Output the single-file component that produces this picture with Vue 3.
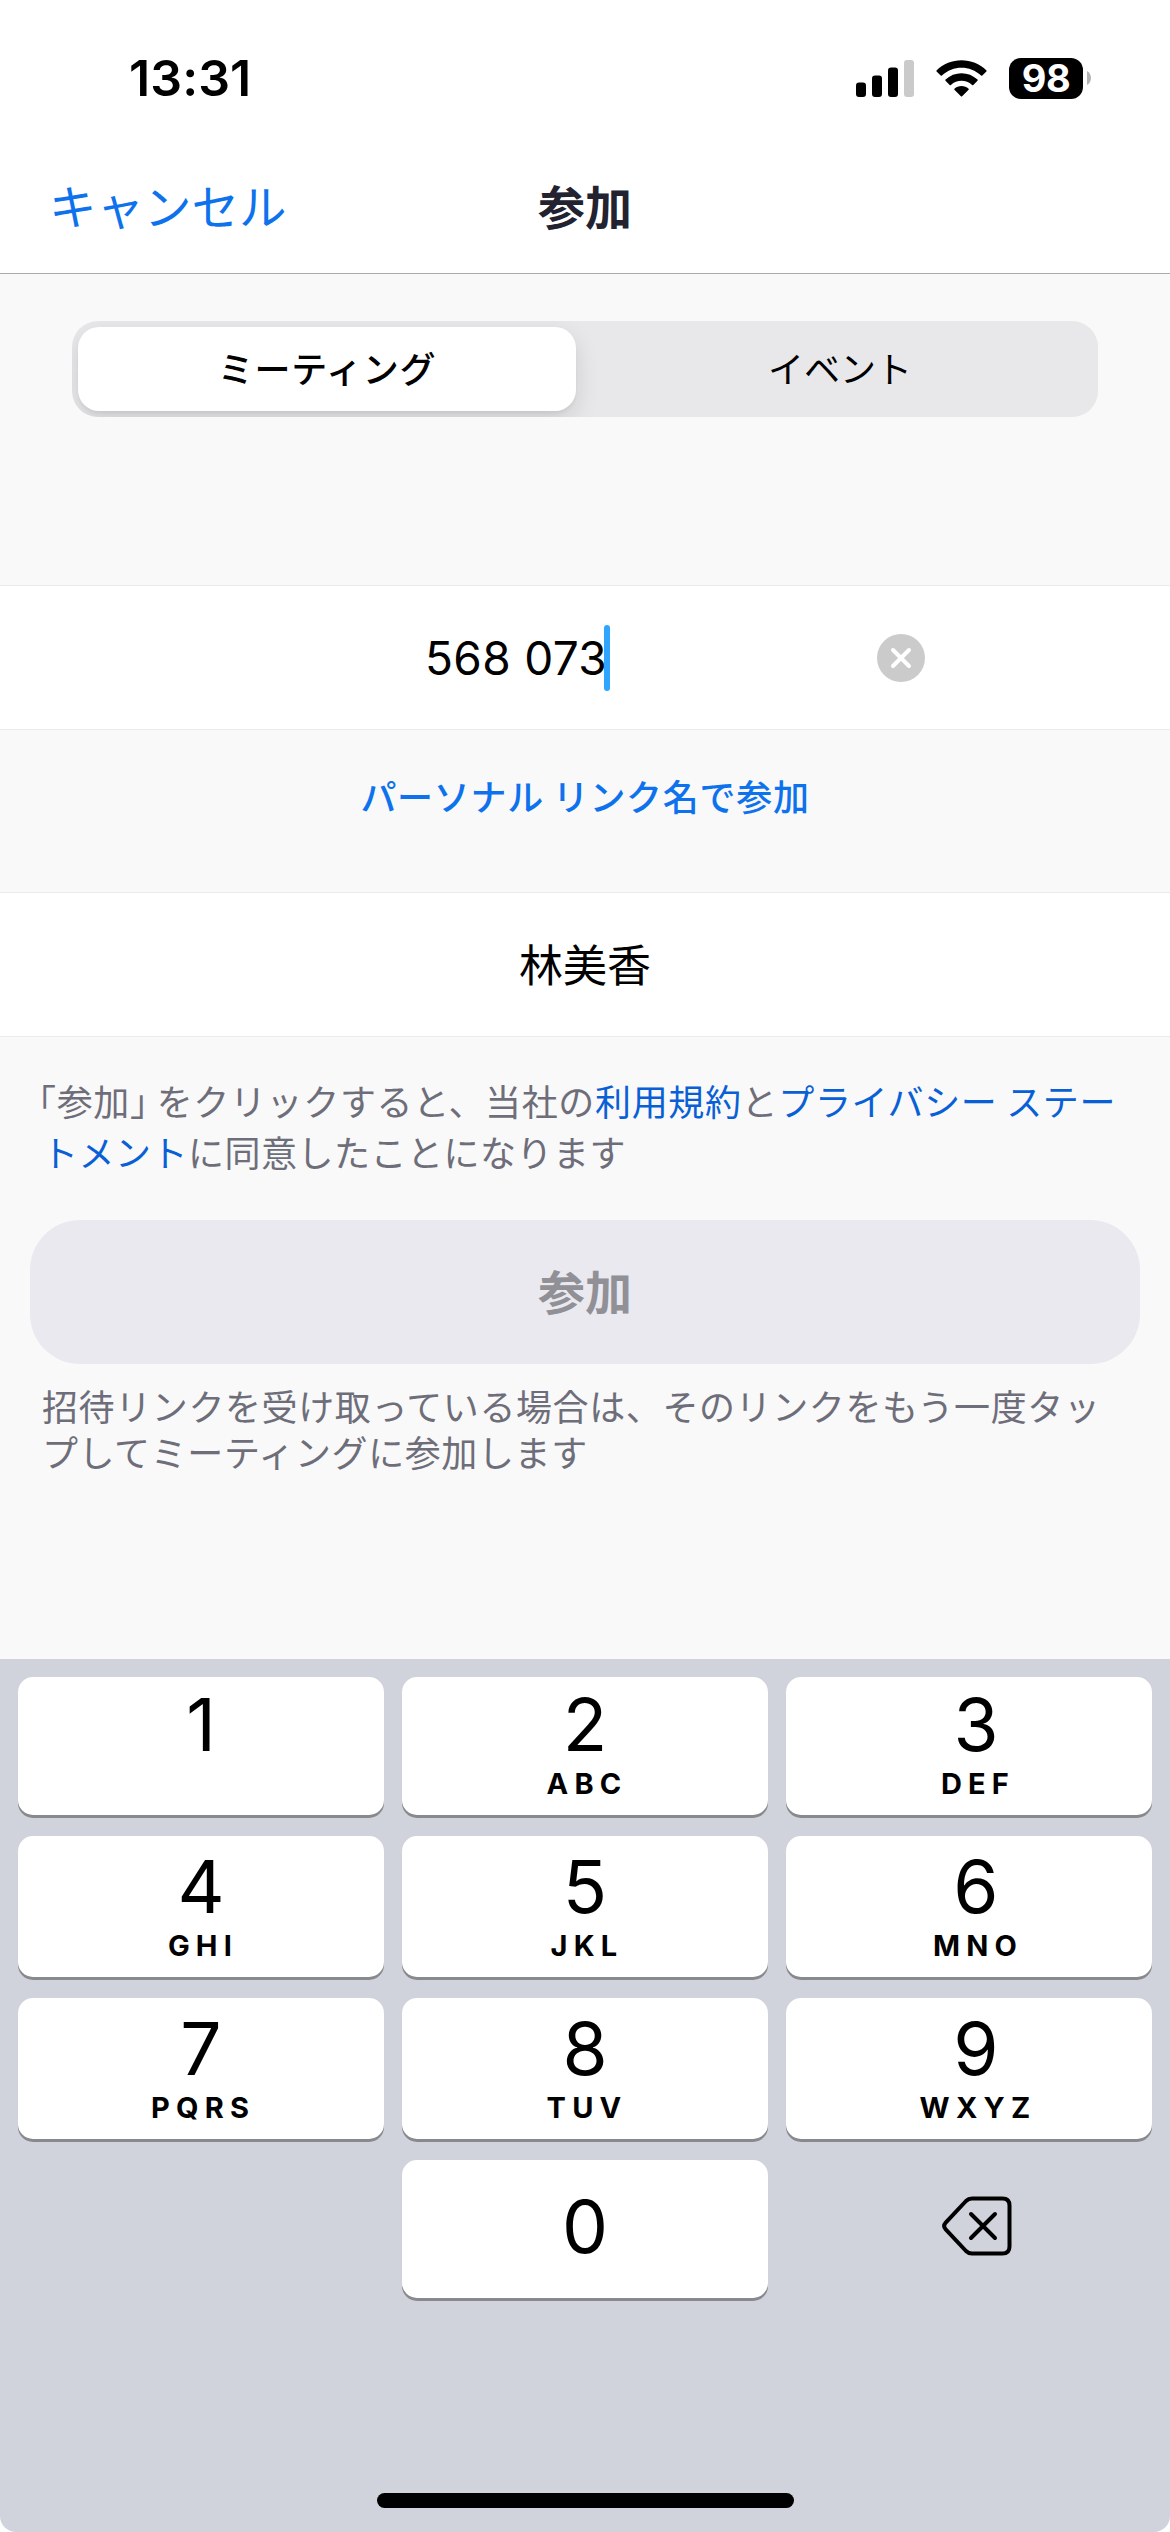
<script setup>
const rows = [
  [{ n: '1', t: '' }, { n: '2', t: 'ABC' }, { n: '3', t: 'DEF' }],
  [{ n: '4', t: 'GHI' }, { n: '5', t: 'JKL' }, { n: '6', t: 'MNO' }],
  [{ n: '7', t: 'PQRS' }, { n: '8', t: 'TUV' }, { n: '9', t: 'WXYZ' }],
]
</script>

<template>
  <div class="screen">
    <header class="top">
      <div class="status">
        <span class="time">13:31</span>
        <div class="indicators">
          <svg class="signal" width="58" height="37" viewBox="0 0 58 37">
            <rect x="0" y="22.5" width="10" height="14.5" rx="3" />
            <rect x="16" y="15.5" width="10" height="21.5" rx="3" />
            <rect x="32" y="7.5" width="10" height="29.5" rx="3" />
            <rect x="48" y="0" width="10" height="37" rx="3" fill="#cacaca" />
          </svg>
          <svg class="wifi" width="51" height="37" viewBox="0 0 51 37">
            <path d="M0.5 10.5C14-3.2 37-3.2 50.5 10.5Q50.8 11 50.4 11.4L46.3 15.6Q45.7 16.1 45.1 15.6C34 5.2 17 5.2 5.9 15.6Q5.3 16.1 4.7 15.6L0.6 11.4Q0.2 11 0.5 10.5Z" />
            <path d="M9.5 19.6C18.2 11 32.8 11 41.5 19.6Q42 20.2 41.5 20.7L37.3 24.9Q36.7 25.4 36.1 24.9C30 19.3 21 19.3 14.9 24.9Q14.3 25.4 13.7 24.9L9.5 20.7Q9 20.2 9.5 19.6Z" />
            <path d="M18.4 28.8C22.2 25 28.8 25 32.6 28.8Q33.1 29.3 32.6 29.8L26.1 36.3Q25.5 36.9 24.9 36.3L18.4 29.8Q17.9 29.3 18.4 28.8Z" />
          </svg>
          <div class="battery">98</div>
          <svg class="nub" width="4" height="14" viewBox="0 0 4 14"><path d="M0 0C5.3 3 5.3 11 0 14Z" fill="#b3b3b3" /></svg>
        </div>
      </div>
      <nav class="nav">
        <span class="cancel">キャンセル</span>
        <h1 class="title">参加</h1>
        <span></span>
      </nav>
    </header>

    <main class="body">
      <div class="segmented">
        <div class="segment active">ミーティング</div>
        <div class="segment">イベント</div>
      </div>

      <div class="field meeting">
        <span></span>
        <span class="number">568 073<i class="caret"></i></span>
        <svg class="clear" width="48" height="48" viewBox="0 0 48 48">
          <circle cx="24" cy="24" r="24" fill="#cbcbcb" />
          <path d="M16 16L32 32M32 16L16 32" stroke="#fff" stroke-width="4" stroke-linecap="round" />
        </svg>
      </div>
      <div class="personal">パーソナル リンク名で参加</div>
      <div class="field name">林美香</div>

      <p class="terms">
        <span class="line first"><span class="half">「</span>参加<span class="half close">」</span>をクリックすると、当社の<a>利用規約</a>と<a>プライバシー ステー</a></span>
        <span class="line"><a>トメント</a>に同意したことになります</span>
      </p>
      <div class="join">参加</div>
      <p class="hint">
        <span class="line">招待リンクを受け取っている場合は、そのリンクをもう一度タッ</span>
        <span class="line">プしてミーティングに参加します</span>
      </p>
    </main>

    <section class="keyboard">
      <div v-for="(row, i) in rows" :key="i" class="row" :class="{ short: i === 0 }">
        <div v-for="k in row" :key="k.n" class="key">
          <span class="digit">{{ k.n }}</span>
          <span class="letters">{{ k.t }}</span>
        </div>
      </div>
      <div class="row short last">
        <div class="blank"></div>
        <div class="key zero"><span class="digit">0</span></div>
        <div class="blank">
          <svg class="delete" width="70" height="60" viewBox="0 0 70 60" fill="none" stroke="#000" stroke-width="4" stroke-linecap="round" stroke-linejoin="round">
            <path d="M30 2.5H60.5Q67.5 2.5 67.5 9.5V50.5Q67.5 57.5 60.5 57.5H30Q26.5 57.5 24 55L3.7 33.4Q0.6 30 3.7 26.6L24 5Q26.5 2.5 30 2.5Z" />
            <path d="M29 18L53 42M53 18L29 42" />
          </svg>
        </div>
      </div>
      <div class="home"></div>
    </section>
  </div>
</template>

<style>
body {
  margin: 0;
  background: #fff;
}
</style>

<style scoped>
.screen {
  width: 1170px;
  height: 2532px;
  display: flex;
  flex-direction: column;
  overflow: hidden;
  background: #fff;
  color: #000;
  font-family: "Noto Sans CJK JP", sans-serif;
}
.top {
  height: 274px;
  box-sizing: border-box;
  border-bottom: 1px solid #a9abad;
}
.status {
  height: 156px;
  box-sizing: border-box;
  padding: 0 79px 0 129px;
  display: flex;
  justify-content: space-between;
  align-items: center;
  font-family: Inter, sans-serif;
}
.time {
  font-size: 50px;
  font-weight: 600;
  line-height: 60px;
  letter-spacing: 0.1px;
}
.indicators {
  display: flex;
  align-items: center;
}
.wifi {
  margin-left: 22px;
}
.battery {
  width: 74px;
  height: 41px;
  margin-left: 22px;
  border-radius: 12px;
  background: #000;
  color: #fff;
  font-size: 38px;
  font-weight: 700;
  line-height: 41px;
  text-align: center;
  letter-spacing: -0.5px;
}
.nub {
  margin-left: 4px;
}
.nav {
  height: 97px;
  padding: 0 49px;
  display: grid;
  grid-template-columns: 1fr auto 1fr;
  align-items: center;
}
.cancel {
  color: #0e72ed;
  font-size: 47.5px;
  line-height: 72px;
}
.title {
  margin: 0;
  color: #222230;
  font-size: 47px;
  font-weight: 700;
  line-height: 72px;
}
.body {
  height: 1385px;
  background: #f9f9f9;
}
.body::before {
  content: "";
  display: block;
  height: 47px;
}
.segmented {
  height: 96px;
  box-sizing: border-box;
  margin: 0 72px;
  padding: 6px;
  display: flex;
  justify-content: space-between;
  border-radius: 26px;
  background: #e8e8ea;
  overflow: hidden;
}
.segment {
  width: 502px;
  border-radius: 21px;
  font-size: 36px;
  line-height: 80px;
  text-align: center;
}
.active {
  width: 498px;
  background: #fff;
  font-weight: 500;
  letter-spacing: 0.8px;
  box-shadow: 0 9px 24px rgba(0, 0, 0, 0.12), 0 3px 3px rgba(0, 0, 0, 0.04);
}
.segment:last-child {
  box-sizing: border-box;
  padding-right: 2px;
}
.field {
  height: 145px;
  box-sizing: border-box;
  border-top: 1px solid #ebebed;
  border-bottom: 1px solid #ebebed;
  background: #fff;
}
.meeting {
  margin-top: 168px;
  padding: 0 245px;
  display: grid;
  grid-template-columns: 180px 1fr 48px;
  align-items: center;
}
.number {
  position: relative;
  font-family: Inter, sans-serif;
  font-size: 46px;
  line-height: 66px;
  letter-spacing: 0.35px;
  white-space: pre;
}
.caret {
  position: absolute;
  left: 179px;
  top: 0;
  width: 6px;
  height: 66px;
  border-radius: 3px;
  background: #2fa5ff;
}
.personal {
  height: 162px;
  color: #0e72ed;
  font-size: 36px;
  font-weight: 500;
  line-height: 130px;
  text-align: center;
  letter-spacing: 0.7px;
}
.name {
  font-size: 44px;
  line-height: 140px;
  text-align: center;
}
.terms,
.hint {
  margin: 0;
  color: #6e6e7a;
  font-family: Inter, "Noto Sans CJK JP", sans-serif;
  font-size: 36px;
  letter-spacing: 0.5px;
}
.terms {
  height: 142px;
  padding: 41px 0 0 42px;
  line-height: 51px;
}
.terms a {
  color: #0960d6;
}
.line {
  display: block;
  white-space: nowrap;
}
.first {
  margin-left: -4px;
  letter-spacing: 0.65px;
  word-spacing: -2px;
}
.half {
  font-feature-settings: "halt";
}
.close {
  margin-right: 8px;
}
.join {
  height: 144px;
  margin: 0 30px;
  border-radius: 50px;
  background: #e9e9ef;
  color: #909096;
  font-size: 47px;
  font-weight: 700;
  line-height: 140px;
  text-align: center;
}
.hint {
  padding: 21px 0 0 42px;
  line-height: 46px;
  letter-spacing: 0.6px;
}
.keyboard {
  height: 873px;
  box-sizing: border-box;
  padding: 18px;
  display: flex;
  flex-direction: column;
  gap: 21px;
  border-radius: 0 0 16px 16px;
  background: #d0d3db;
  font-family: Inter, sans-serif;
}
.row {
  display: grid;
  grid-template-columns: repeat(3, 366px);
  gap: 18px;
  height: 141px;
}
.short {
  height: 138px;
}
.key {
  box-sizing: border-box;
  padding-top: 8px;
  display: flex;
  flex-direction: column;
  align-items: center;
  border-radius: 15px;
  background: #fff;
  box-shadow: 0 3px 0 #88898d;
}
.key:nth-child(3) {
  padding-left: 14px;
}
.short .key {
  padding-top: 5px;
}
.short .zero {
  padding-top: 24px;
}
.digit {
  height: 85px;
  font-size: 73px;
  line-height: 85px;
}
.letters {
  height: 33px;
  padding-left: 4px;
  font-size: 29px;
  font-weight: 700;
  line-height: 33px;
  letter-spacing: 6.2px;
}
.delete {
  display: block;
  margin: 36px 0 0 156px;
}
.home {
  width: 417px;
  height: 15px;
  margin: 174px auto 0;
  border-radius: 8px;
  background: #000;
}
</style>
